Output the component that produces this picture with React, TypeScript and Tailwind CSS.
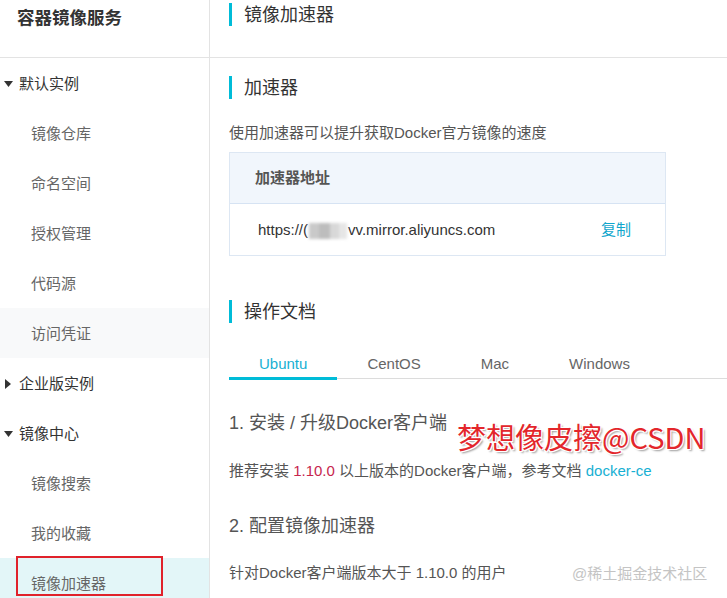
const sideItems: { label: string; kind: 'open' | 'closed' | 'item' | 'hover' | 'active' }[] = [
  { label: '默认实例', kind: 'open' },
  { label: '镜像仓库', kind: 'item' },
  { label: '命名空间', kind: 'item' },
  { label: '授权管理', kind: 'item' },
  { label: '代码源', kind: 'item' },
  { label: '访问凭证', kind: 'hover' },
  { label: '企业版实例', kind: 'closed' },
  { label: '镜像中心', kind: 'open' },
  { label: '镜像搜索', kind: 'item' },
  { label: '我的收藏', kind: 'item' },
  { label: '镜像加速器', kind: 'active' },
];

const tabs = ['Ubuntu', 'CentOS', 'Mac', 'Windows'];

function Caret({ open }: { open: boolean }) {
  return open ? (
    <svg width="9" height="6" viewBox="0 0 9 6" className="mr-[6px] ml-[4px]">
      <path d="M0 0h9L4.5 6z" fill="#333" />
    </svg>
  ) : (
    <svg width="6" height="10" viewBox="0 0 6 10" className="mr-[8px] ml-[5px]">
      <path d="M0 0l6 5-6 5z" fill="#333" />
    </svg>
  );
}

function SectionTitle({ children, className = '' }: { children: string; className?: string }) {
  return (
    <div className={`flex h-[23px] items-center ${className}`}>
      <span className="h-[23px] w-[3px] bg-[#00bcd8]" />
      <span className="ml-[12px] pt-[2px] text-[18px] leading-[23px] text-[#333]">{children}</span>
    </div>
  );
}

export default function App() {
  return (
    <div className="relative flex h-[598px] w-[727px] overflow-hidden bg-white font-['Liberation_Sans','Noto_Sans_CJK_SC',sans-serif]">
      <aside className="w-[210px] shrink-0 border-r border-[#e3e3e3] bg-white">
        <div className="h-[58px] border-b border-[#e3e3e3] pl-[17px] pt-[6px] text-[17.5px] font-bold leading-[24px] text-[#333]">
          容器镜像服务
        </div>
        {sideItems.map((it) => {
          const group = it.kind === 'open' || it.kind === 'closed';
          return (
            <div
              key={it.label}
              className={`flex h-[50px] items-center text-[15px] ${
                group ? 'text-[#333]' : 'pl-[31px] text-[#666]'
              } ${it.kind === 'hover' ? 'bg-[#f8f9fa]' : ''} ${
                it.kind === 'active' ? 'bg-[#e3f6f8] pt-[3px] text-[#10a6cc]' : 'pt-[2px]'
              }`}
            >
              {group && <Caret open={it.kind === 'open'} />}
              {it.label}
            </div>
          );
        })}
      </aside>

      <main className="min-w-0 flex-1">
        <div className="h-[58px] border-b border-[#e3e3e3] pl-[19px] pt-[3px]">
          <SectionTitle>镜像加速器</SectionTitle>
        </div>

        <div className="pl-[19px]">
          <SectionTitle className="mt-[18px]">加速器</SectionTitle>
          <p className="mt-[24px] text-[15px] leading-[20px] text-[#555]">
            使用加速器可以提升获取Docker官方镜像的速度
          </p>

          <div className="mt-[9px] w-[437px] border border-[#dde7f3]">
            <div className="flex h-[51px] items-center border-b border-[#d6e3f3] bg-[#f1f6fc] pl-[25px] pt-[1px] text-[15px] font-bold text-[#555]">
              加速器地址
            </div>
            <div className="flex h-[51px] items-center justify-between pl-[28px] pr-[34px] pt-[2px] text-[15px] text-[#333]">
              <span className="flex items-center">
                https://(
                <span className="mx-[1px] inline-flex h-[16px] w-[38px] blur-[1.5px]">
                  <span className="h-full w-[10px] bg-[#c9c9c9]" />
                  <span className="h-full w-[11px] bg-[#bdbdbd]" />
                  <span className="h-full w-[9px] bg-[#d8d8d8]" />
                  <span className="h-full w-[8px] bg-[#e6e6e6]" />
                </span>
                vv.mirror.aliyuncs.com
              </span>
              <span className="text-[#10a6cc]">复制</span>
            </div>
          </div>

          <SectionTitle className="mt-[44px]">操作文档</SectionTitle>

          <div className="mt-[31px] flex border-b border-[#dcdcdc]">
            {tabs.map((t, i) => (
              <div
                key={t}
                className={`-mb-[2px] border-b-[3px] px-[30px] pb-[3px] text-[15px] leading-[20px] ${
                  i === 0 ? 'border-[#00bcd8] text-[#17b0d3]' : 'border-transparent text-[#666]'
                }`}
              >
                {t}
              </div>
            ))}
          </div>

          <h3 className="mt-[31px] text-[18px] leading-[26px] text-[#555]">1. 安装 / 升级Docker客户端</h3>
          <p className="mt-[25px] text-[15px] leading-[20px] text-[#555]">
            推荐安装 <span className="text-[#c7254e]">1.10.0</span> 以上版本的Docker客户端，参考文档{' '}
            <span className="text-[#17b0d3]">docker-ce</span>
          </p>

          <h3 className="mt-[32px] text-[18px] leading-[26px] text-[#555]">2. 配置镜像加速器</h3>
          <p className="mt-[24px] text-[15px] leading-[20px] text-[#555]">针对Docker客户端版本大于 1.10.0 的用户</p>
        </div>
      </main>

      <div className="pointer-events-none absolute left-[457px] top-[418px] font-['Noto_Sans_CJK_SC',sans-serif] text-[29px] leading-[36px] text-[#e3262b] [text-shadow:1px_1px_0_#fff,-1px_-1px_0_#fff,1px_-1px_0_#fff,-1px_1px_0_#fff,2px_2px_2px_#9a9a9a]">
        梦想像皮擦@CSDN
      </div>
      <div className="pointer-events-none absolute left-[572px] top-[564px] text-[15px] leading-[20px] text-[#c4c4c4]">
        @稀土掘金技术社区
      </div>
      <div className="pointer-events-none absolute left-[16px] top-[556px] h-[40px] w-[147px] border-2 border-[#e0222b]" />
    </div>
  );
}
